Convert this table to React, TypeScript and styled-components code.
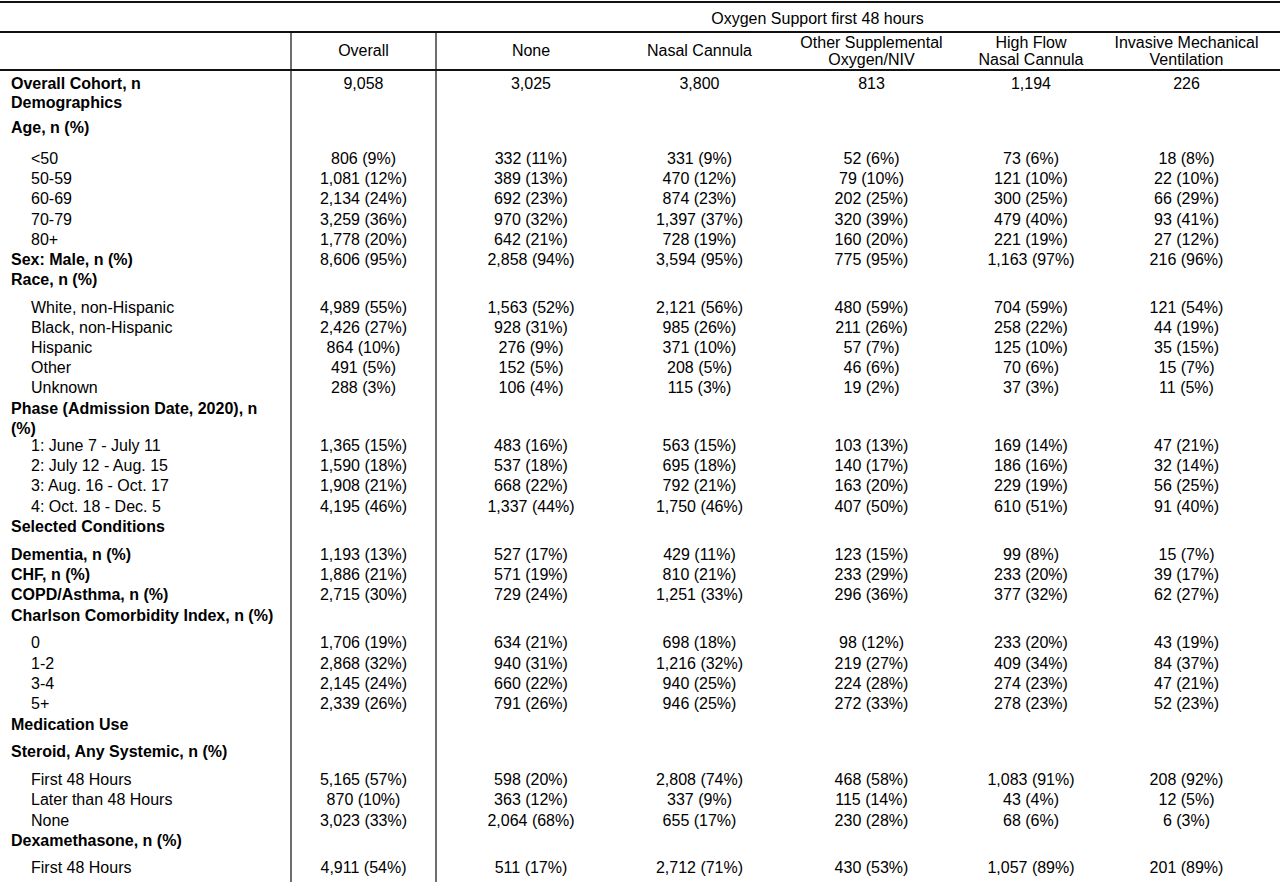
import React from 'react';
import styled, { createGlobalStyle } from 'styled-components';

const GlobalStyle = createGlobalStyle`
  html, body {
    margin: 0;
    padding: 0;
    background: #ffffff;
    overflow: hidden;
  }
  body {
    font-family: "Liberation Sans", Arial, Helvetica, sans-serif;
    color: #000000;
  }
`;

const COLS = '290px 147px 188px 149px 195px 124px 187px';
const RULE = '#111111';
const DIVIDER = '#6e6e6e';

const Page = styled.div`
  width: 1280px;
  height: 882px;
  overflow: hidden;
  padding-top: 1px;
  box-sizing: border-box;
`;

const Table = styled.div`
  border-top: 2px solid ${RULE};
  font-size: 16px;
`;

const SpanRow = styled.div`
  display: grid;
  grid-template-columns: ${COLS};
  height: 28px;
  border-bottom: 2px solid ${RULE};
`;

const SpanTitle = styled.div`
  grid-column: 3 / 8;
  text-align: center;
  padding: 6px 82px 0 0;
  line-height: 20px;
`;

const HeadRow = styled.div`
  display: grid;
  grid-template-columns: ${COLS};
  height: 36px;
  border-bottom: 2px solid ${RULE};
`;

const HeadCell = styled.div<{ $divided?: boolean }>`
  display: flex;
  align-items: center;
  justify-content: center;
  text-align: center;
  line-height: 17.3px;
  white-space: pre-line;
  box-sizing: border-box;
  ${(p) => (p.$divided ? `border-left: 2px solid ${DIVIDER}; border-right: 2px solid ${DIVIDER};` : '')}
`;

const Body = styled.div`
  display: flex;
  flex-direction: column;
`;

const Row = styled.div<{ $h: number; $top?: number }>`
  display: grid;
  grid-template-columns: ${COLS};
  height: ${(p) => p.$h + (p.$top ?? 0)}px;
`;

const Label = styled.div<{ $indent?: boolean; $bold?: boolean; $top?: number }>`
  padding-left: ${(p) => (p.$indent ? 31 : 11)}px;
  padding-top: ${(p) => p.$top ?? 0}px;
  font-weight: ${(p) => (p.$bold ? 700 : 400)};
  line-height: 20px;
  white-space: pre-line;
`;

const Value = styled.div<{ $divided?: boolean; $top?: number }>`
  text-align: center;
  line-height: 20px;
  padding-top: ${(p) => p.$top ?? 0}px;
  white-space: nowrap;
  box-sizing: border-box;
  ${(p) => (p.$divided ? `border-left: 2px solid ${DIVIDER}; border-right: 2px solid ${DIVIDER};` : '')}
`;

type RowDef = {
  label: string;
  indent?: boolean;
  h: number;
  v?: string[];
};

const headers = [
  'Overall',
  'None',
  'Nasal Cannula',
  'Other Supplemental\nOxygen/NIV',
  'High Flow\nNasal Cannula',
  'Invasive Mechanical\nVentilation',
];

const rows: RowDef[] = [
  { label: 'Overall Cohort, n', h: 19.5, v: ['9,058', '3,025', '3,800', '813', '1,194', '226'] },
  { label: 'Demographics', h: 25 },
  { label: 'Age, n (%)', h: 30.5 },
  { label: '<50', indent: true, h: 20.7, v: ['806 (9%)', '332 (11%)', '331 (9%)', '52 (6%)', '73 (6%)', '18 (8%)'] },
  { label: '50-59', indent: true, h: 20.2, v: ['1,081 (12%)', '389 (13%)', '470 (12%)', '79 (10%)', '121 (10%)', '22 (10%)'] },
  { label: '60-69', indent: true, h: 20.2, v: ['2,134 (24%)', '692 (23%)', '874 (23%)', '202 (25%)', '300 (25%)', '66 (29%)'] },
  { label: '70-79', indent: true, h: 20.2, v: ['3,259 (36%)', '970 (32%)', '1,397 (37%)', '320 (39%)', '479 (40%)', '93 (41%)'] },
  { label: '80+', indent: true, h: 19.8, v: ['1,778 (20%)', '642 (21%)', '728 (19%)', '160 (20%)', '221 (19%)', '27 (12%)'] },
  { label: 'Sex: Male, n (%)', h: 20, v: ['8,606 (95%)', '2,858 (94%)', '3,594 (95%)', '775 (95%)', '1,163 (97%)', '216 (96%)'] },
  { label: 'Race, n (%)', h: 28.2 },
  { label: 'White, non-Hispanic', indent: true, h: 20, v: ['4,989 (55%)', '1,563 (52%)', '2,121 (56%)', '480 (59%)', '704 (59%)', '121 (54%)'] },
  { label: 'Black, non-Hispanic', indent: true, h: 20.1, v: ['2,426 (27%)', '928 (31%)', '985 (26%)', '211 (26%)', '258 (22%)', '44 (19%)'] },
  { label: 'Hispanic', indent: true, h: 20.1, v: ['864 (10%)', '276 (9%)', '371 (10%)', '57 (7%)', '125 (10%)', '35 (15%)'] },
  { label: 'Other', indent: true, h: 20.1, v: ['491 (5%)', '152 (5%)', '208 (5%)', '46 (6%)', '70 (6%)', '15 (7%)'] },
  { label: 'Unknown', indent: true, h: 21.1, v: ['288 (3%)', '106 (4%)', '115 (3%)', '19 (2%)', '37 (3%)', '11 (5%)'] },
  { label: 'Phase (Admission Date, 2020), n\n(%)', h: 36.7 },
  { label: '1: June 7 - July 11', indent: true, h: 20.2, v: ['1,365 (15%)', '483 (16%)', '563 (15%)', '103 (13%)', '169 (14%)', '47 (21%)'] },
  { label: '2: July 12 - Aug. 15', indent: true, h: 20.4, v: ['1,590 (18%)', '537 (18%)', '695 (18%)', '140 (17%)', '186 (16%)', '32 (14%)'] },
  { label: '3: Aug. 16 - Oct. 17', indent: true, h: 20.2, v: ['1,908 (21%)', '668 (22%)', '792 (21%)', '163 (20%)', '229 (19%)', '56 (25%)'] },
  { label: '4: Oct. 18 - Dec. 5', indent: true, h: 20, v: ['4,195 (46%)', '1,337 (44%)', '1,750 (46%)', '407 (50%)', '610 (51%)', '91 (40%)'] },
  { label: 'Selected Conditions', h: 28.3 },
  { label: 'Dementia, n (%)', h: 20, v: ['1,193 (13%)', '527 (17%)', '429 (11%)', '123 (15%)', '99 (8%)', '15 (7%)'] },
  { label: 'CHF, n (%)', h: 20.2, v: ['1,886 (21%)', '571 (19%)', '810 (21%)', '233 (29%)', '233 (20%)', '39 (17%)'] },
  { label: 'COPD/Asthma, n (%)', h: 20.5, v: ['2,715 (30%)', '729 (24%)', '1,251 (33%)', '296 (36%)', '377 (32%)', '62 (27%)'] },
  { label: 'Charlson Comorbidity Index, n (%)', h: 27.7 },
  { label: '0', indent: true, h: 20.2, v: ['1,706 (19%)', '634 (21%)', '698 (18%)', '98 (12%)', '233 (20%)', '43 (19%)'] },
  { label: '1-2', indent: true, h: 20.4, v: ['2,868 (32%)', '940 (31%)', '1,216 (32%)', '219 (27%)', '409 (34%)', '84 (37%)'] },
  { label: '3-4', indent: true, h: 20.5, v: ['2,145 (24%)', '660 (22%)', '940 (25%)', '224 (28%)', '274 (23%)', '47 (21%)'] },
  { label: '5+', indent: true, h: 20.3, v: ['2,339 (26%)', '791 (26%)', '946 (25%)', '272 (33%)', '278 (23%)', '52 (23%)'] },
  { label: 'Medication Use', h: 27.4 },
  { label: 'Steroid, Any Systemic, n (%)', h: 28.3 },
  { label: 'First 48 Hours', indent: true, h: 20, v: ['5,165 (57%)', '598 (20%)', '2,808 (74%)', '468 (58%)', '1,083 (91%)', '208 (92%)'] },
  { label: 'Later than 48 Hours', indent: true, h: 20.3, v: ['870 (10%)', '363 (12%)', '337 (9%)', '115 (14%)', '43 (4%)', '12 (5%)'] },
  { label: 'None', indent: true, h: 20.4, v: ['3,023 (33%)', '2,064 (68%)', '655 (17%)', '230 (28%)', '68 (6%)', '6 (3%)'] },
  { label: 'Dexamethasone, n (%)', h: 27 },
  { label: 'First 48 Hours', indent: true, h: 40, v: ['4,911 (54%)', '511 (17%)', '2,712 (71%)', '430 (53%)', '1,057 (89%)', '201 (89%)'] },
];

const FIRST_ROW_TOP = 2.6;

export default function App() {
  return (
    <Page>
      <GlobalStyle />
      <Table>
        <SpanRow>
          <SpanTitle>Oxygen Support first 48 hours</SpanTitle>
        </SpanRow>
        <HeadRow>
          <HeadCell />
          {headers.map((h, i) => (
            <HeadCell key={h} $divided={i === 0}>
              {h}
            </HeadCell>
          ))}
        </HeadRow>
        <Body>
          {rows.map((r, idx) => {
            const top = idx === 0 ? FIRST_ROW_TOP : 0;
            return (
              <Row key={idx} $h={r.h} $top={top}>
                <Label $indent={r.indent} $bold={!r.indent} $top={top}>
                  {r.label}
                </Label>
                {(r.v ?? ['', '', '', '', '', '']).map((val, i) => (
                  <Value key={i} $divided={i === 0} $top={top}>
                    {val}
                  </Value>
                ))}
              </Row>
            );
          })}
        </Body>
      </Table>
    </Page>
  );
}
